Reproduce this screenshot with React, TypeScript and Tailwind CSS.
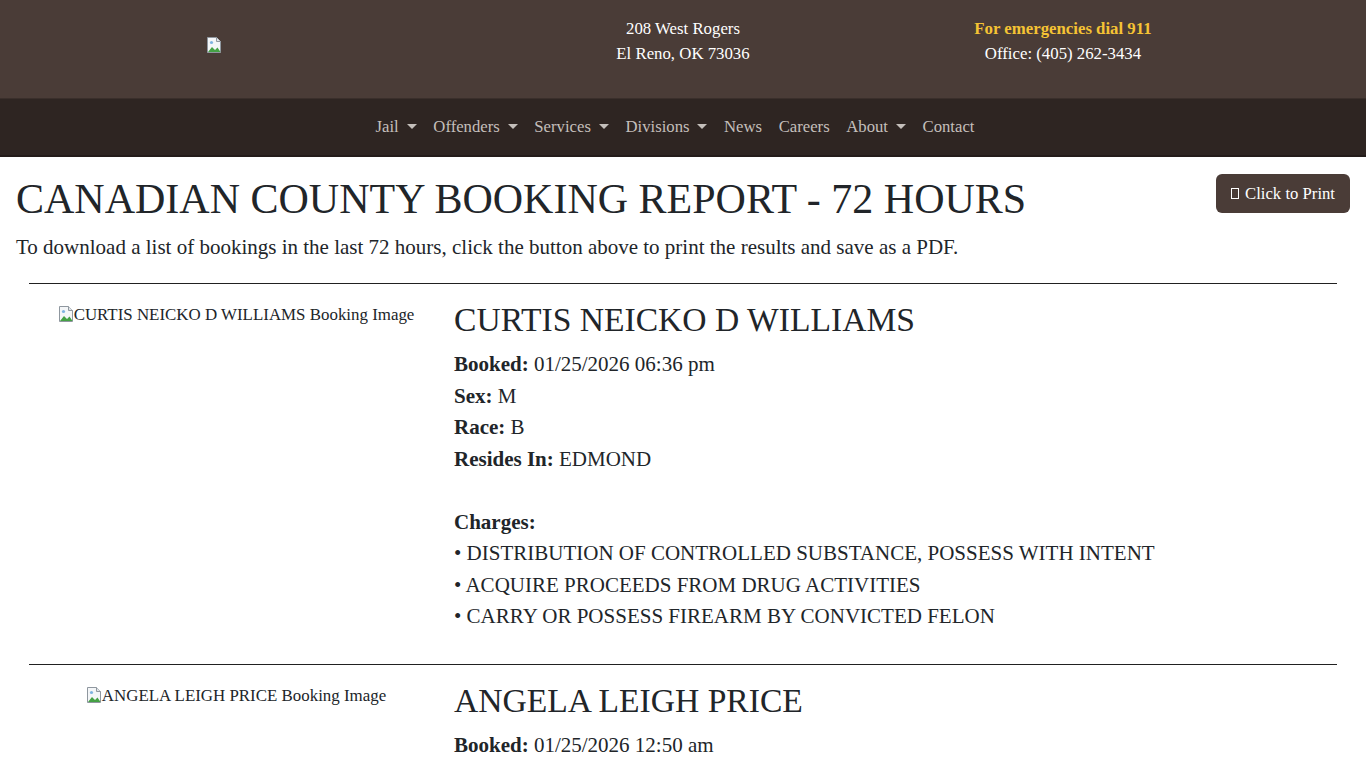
import React from 'react';

const serif = { fontFamily: '"Liberation Serif", "Times New Roman", serif' };

type Booking = {
  name: string;
  booked: string;
  sex: string;
  race: string;
  resides: string;
  charges: string[];
};

const bookings: Booking[] = [
  {
    name: 'CURTIS NEICKO D WILLIAMS',
    booked: '01/25/2026 06:36 pm',
    sex: 'M',
    race: 'B',
    resides: 'EDMOND',
    charges: [
      'DISTRIBUTION OF CONTROLLED SUBSTANCE, POSSESS WITH INTENT',
      'ACQUIRE PROCEEDS FROM DRUG ACTIVITIES',
      'CARRY OR POSSESS FIREARM BY CONVICTED FELON',
    ],
  },
  {
    name: 'ANGELA LEIGH PRICE',
    booked: '01/25/2026 12:50 am',
    sex: 'F',
    race: 'W',
    resides: 'EL RENO',
    charges: ['PUBLIC INTOXICATION'],
  },
];

const BrokenImage = () => (
  <svg width="16" height="16" viewBox="0 0 16 16" className="inline-block align-[-2px]">
    <path d="M1.5 0.5h9l4 4v11h-13z" fill="#f4f6f8" stroke="#8f979f" />
    <path d="M10.5 0.5v4h4" fill="#dfe4e8" stroke="#8f979f" />
    <path d="M2 15l4-5 3 3 2.5-2.5 3 4.5z" fill="#45a145" />
    <circle cx="5.5" cy="5.5" r="1.6" fill="#7fb3e0" />
  </svg>
);

const navItems: { label: string; caret: boolean }[] = [
  { label: 'Jail', caret: true },
  { label: 'Offenders', caret: true },
  { label: 'Services', caret: true },
  { label: 'Divisions', caret: true },
  { label: 'News', caret: false },
  { label: 'Careers', caret: false },
  { label: 'About', caret: true },
  { label: 'Contact', caret: false },
];

const BookingRow: React.FC<{ b: Booking }> = ({ b }) => (
  <div>
    <hr className="border-0 border-t border-[#212121] mx-[13px]" />
    <div className="grid grid-cols-[428px_1fr] pt-[17px] pb-[31px]">
      <div className="text-center text-[16.9px] leading-[24px] pt-[2px] pl-[12px] text-[#212529]">
        <BrokenImage />
        {b.name} Booking Image
      </div>
      <div className="pl-[10px]">
        <h2 className="text-[33.6px] leading-[38px] mb-[10px] text-[#212529]">{b.name}</h2>
        <div className="text-[21px] leading-[31.5px] text-[#212529]">
          <div>
            <b>Booked:</b> {b.booked}
          </div>
          <div>
            <b>Sex:</b> {b.sex}
          </div>
          <div>
            <b>Race:</b> {b.race}
          </div>
          <div>
            <b>Resides In:</b> {b.resides}
          </div>
          <div>&nbsp;</div>
          <div>
            <b>Charges:</b>
          </div>
          {b.charges.map((c) => (
            <div key={c}>• {c}</div>
          ))}
        </div>
      </div>
    </div>
  </div>
);

export default function App() {
  return (
    <div className="min-h-screen bg-white" style={serif}>
      {/* Top header */}
      <header className="bg-[#4a3c37] h-[98px] grid grid-cols-[428px_510px_250px] text-white text-[16.8px] leading-[25px]">
        <div className="flex justify-center pt-[37px]">
          <BrokenImage />
        </div>
        <div className="text-center pt-[16px]">
          <div>208 West Rogers</div>
          <div>El Reno, OK 73036</div>
        </div>
        <div className="text-center pt-[16px]">
          <div className="font-bold text-[#f5c334]">For emergencies dial 911</div>
          <div>Office: (405) 262-3434</div>
        </div>
      </header>

      {/* Nav bar */}
      <nav className="bg-[#2e2522] h-[59px] border-t border-[#3a2f2b] border-b-2 border-b-[#241c1a] flex items-center justify-center pr-[16px]">
        {navItems.map((n) => (
          <span key={n.label} className="px-[8.3px] text-[16.7px] text-[#c4bfbb] flex items-center">
            {n.label}
            {n.caret && (
              <span className="ml-[8px] inline-block w-0 h-0 border-x-[5px] border-x-transparent border-t-[5px] border-t-[#c4bfbb]" />
            )}
          </span>
        ))}
      </nav>

      {/* Content */}
      <main className="px-[16px] pt-[18px] text-[#212529]">
        <div className="flex justify-between items-start">
          <h1 className="text-[42px] leading-[48px] mb-[9px]">CANADIAN COUNTY BOOKING REPORT - 72 HOURS</h1>
          <button className="-mt-[1px] h-[39px] px-[15px] rounded-[6px] bg-[#4a3c37] text-white text-[16.7px] flex items-center gap-[6px]">
            <span className="inline-block w-[8px] h-[11px] border border-white" />
            Click to Print
          </button>
        </div>
        <p className="text-[21px] leading-[30px] mb-[21px]">
          To download a list of bookings in the last 72 hours, click the button above to print the results and save as a PDF.
        </p>
        {bookings.map((b) => (
          <BookingRow key={b.name} b={b} />
        ))}
      </main>
    </div>
  );
}
